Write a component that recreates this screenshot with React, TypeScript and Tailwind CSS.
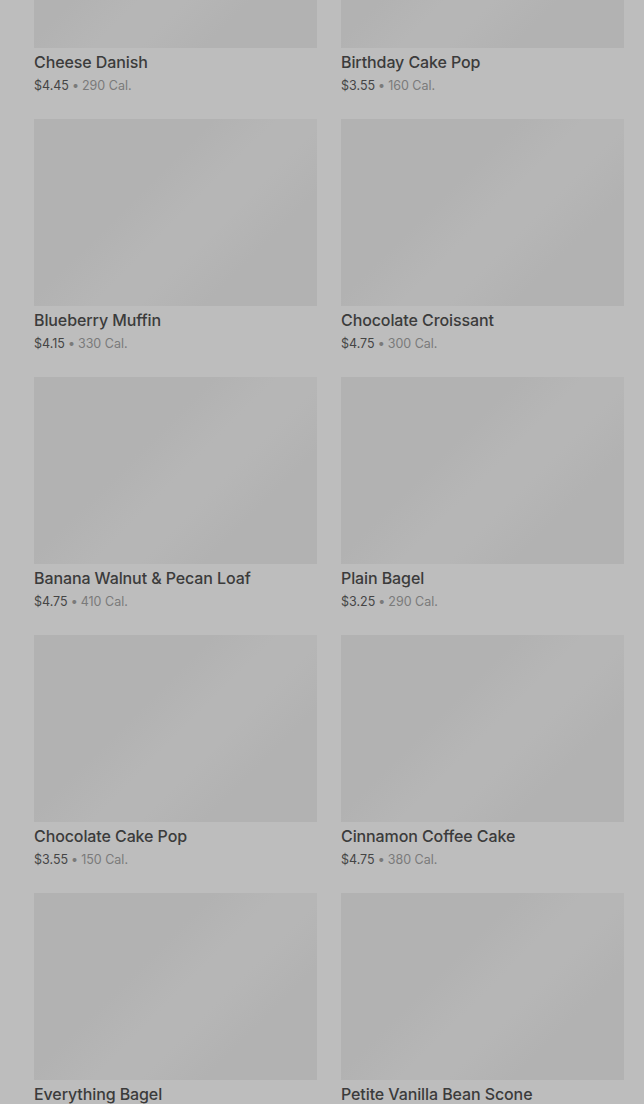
const items = [
  { name: 'Cheese Danish', price: '$4.45', cal: '290 Cal.' },
  { name: 'Birthday Cake Pop', price: '$3.55', cal: '160 Cal.' },
  { name: 'Blueberry Muffin', price: '$4.15', cal: '330 Cal.' },
  { name: 'Chocolate Croissant', price: '$4.75', cal: '300 Cal.' },
  { name: 'Banana Walnut & Pecan Loaf', price: '$4.75', cal: '410 Cal.' },
  { name: 'Plain Bagel', price: '$3.25', cal: '290 Cal.' },
  { name: 'Chocolate Cake Pop', price: '$3.55', cal: '150 Cal.' },
  { name: 'Cinnamon Coffee Cake', price: '$4.75', cal: '380 Cal.' },
  { name: 'Everything Bagel', price: '$3.25', cal: '290 Cal.' },
  { name: 'Petite Vanilla Bean Scone', price: '$1.95', cal: '130 Cal.' },
];

function ProductCard({ name, price, cal }: { name: string; price: string; cal: string }) {
  return (
    <div className="flex flex-col">
      <div className="h-[187px] w-full bg-[linear-gradient(135deg,#b2b2b2_0%,#b2b2b2_38%,#b6b6b6_52%,#b6b6b6_62%,#b2b2b2_76%,#b2b2b2_100%)]" />
      <div className="mt-[2px] text-[16px] leading-[24px] font-medium tracking-[-0.1px] text-[#3b3b3b]">{name}</div>
      <div className="mt-[2px] text-[12.5px] leading-[20px] text-[#7a7a7a]">
        <span className="text-[#454545]">{price}</span>
        <span className="mx-[3px]">•</span>
        <span>{cal}</span>
      </div>
    </div>
  );
}

export default function App() {
  return (
    <div
      className="h-[1104px] w-full overflow-hidden bg-[#bdbdbd]"
      style={{ fontFamily: 'Inter, "Noto Sans", sans-serif' }}
    >
      <div className="-mt-[139px] grid grid-cols-2 gap-x-[24px] gap-y-[23px] pl-[34px] pr-[20px]">
        {items.map((it) => (
          <ProductCard key={it.name} {...it} />
        ))}
      </div>
    </div>
  );
}
